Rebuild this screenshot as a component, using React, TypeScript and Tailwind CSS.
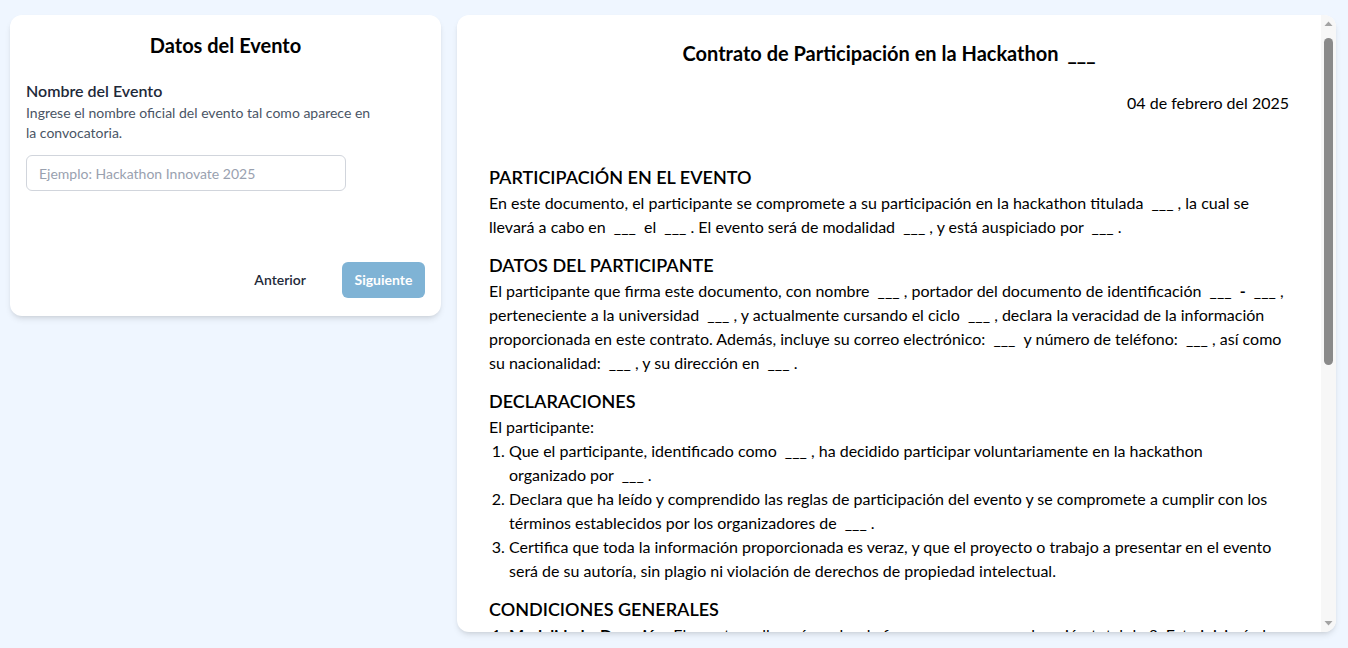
import React from 'react';

const Blank = () => <span className="ml-1">___</span>;

const EventForm = () => {
  return (
    <div className="w-[431px] shrink-0 self-start rounded-xl bg-white px-4 pt-4 pb-[18px] shadow-md">
      <h2 className="text-center text-xl font-bold text-black">Datos del Evento</h2>
      <div className="mt-5">
        <label className="block font-semibold text-gray-800">Nombre del Evento</label>
        <p className="max-w-[350px] text-sm text-gray-600">
          Ingrese el nombre oficial del evento tal como aparece en la convocatoria.
        </p>
        <input
          type="text"
          placeholder="Ejemplo: Hackathon Innovate 2025"
          className="mt-3 h-9 w-80 rounded-md border border-gray-300 px-3 text-sm text-gray-800 placeholder:text-gray-400"
        />
      </div>
      <div className="mt-[71px] flex items-center justify-end gap-5">
        <button className="px-4 text-sm font-semibold text-gray-800">Anterior</button>
        <button className="h-9 w-[83px] rounded-md bg-[#7fb3d5] text-sm font-bold text-white">Siguiente</button>
      </div>
    </div>
  );
};

// the browser hides its own scrollbar in the capture, so draw the classic one
const FakeScrollbar = () => (
  <div className="flex w-[15px] shrink-0 flex-col items-center bg-[#f7f7f7]">
    <svg width="15" height="17" viewBox="0 0 15 17">
      <path d="M3.5 11 L7.5 6.5 L11.5 11 Z" fill="#a3a3a3" />
    </svg>
    <div className="mt-1.5 h-[327px] w-[9px] rounded-full bg-[#8a8a8a]" />
    <div className="flex-1" />
    <svg width="15" height="17" viewBox="0 0 15 17">
      <path d="M3.5 6 L7.5 10.5 L11.5 6 Z" fill="#a3a3a3" />
    </svg>
  </div>
);

const ContractPreview = () => {
  return (
    <div className="flex h-[617px] flex-1 overflow-hidden rounded-xl bg-white shadow-md">
      <div className="flex-1 overflow-hidden px-8 pt-6 text-base leading-6 text-black">
        <h1 className="text-center text-xl font-bold leading-7">
          Contrato de Participación en la Hackathon <Blank />
        </h1>
        <p className="mt-6 text-right">04 de febrero del 2025</p>

        <section className="mt-12">
          <h3 className="text-lg font-semibold leading-7">PARTICIPACIÓN EN EL EVENTO</h3>
          <p>
            En este documento, el participante se compromete a su participación en la hackathon titulada <Blank /> , la cual se llevará a cabo en <Blank />  <span className="ml-1">el</span> <Blank /> . El evento será de modalidad <Blank /> , y está auspiciado por <Blank /> .
          </p>
        </section>

        <section className="mt-3">
          <h3 className="text-lg font-semibold leading-7">DATOS DEL PARTICIPANTE</h3>
          <p>
            El participante que firma este documento, con nombre <Blank /> , portador del documento de identificación <Blank /> <b className="ml-1">-</b> <Blank /> , perteneciente a la universidad <Blank /> , y actualmente cursando el ciclo <Blank /> , declara la veracidad de la información proporcionada en este contrato. Además, incluye su correo electrónico: <Blank /> <span className="ml-1">y</span> número de teléfono: <Blank /> , así como su nacionalidad: <Blank /> , y su dirección en <Blank /> .
          </p>
        </section>

        <section className="mt-3">
          <h3 className="text-lg font-semibold leading-7">DECLARACIONES</h3>
          <p>El participante:</p>
          <ol className="ml-5 list-decimal">
            <li>
              Que el participante, identificado como <Blank /> , ha decidido participar voluntariamente en la hackathon
              <br />
              organizado por <Blank /> .
            </li>
            <li>Declara que ha leído y comprendido las reglas de participación del evento y se compromete a cumplir con los términos establecidos por los organizadores de <Blank /> .</li>
            <li>Certifica que toda la información proporcionada es veraz, y que el proyecto o trabajo a presentar en el evento será de su autoría, sin plagio ni violación de derechos de propiedad intelectual.</li>
          </ol>
        </section>

        <section className="mt-3">
          <h3 className="text-lg font-semibold leading-7">CONDICIONES GENERALES</h3>
          <ol className="ml-5 list-decimal">
            <li><b>Modalidad y Duración:</b> El evento se llevará a cabo de forma <Blank /> , con una duración total de 8. Este iniciará el <Blank /> y finalizará el <Blank /> .</li>
            <li><b>Requisitos de Participación:</b> El participante deberá cumplir con todos los requisitos establecidos en las bases del evento.</li>
          </ol>
        </section>
      </div>
      <FakeScrollbar />
    </div>
  );
};

export default function App() {
  return (
    <div className="flex min-h-screen gap-4 bg-blue-50 pt-[15px] pr-3 pl-2.5 font-['Lato',sans-serif]">
      <EventForm />
      <ContractPreview />
    </div>
  );
}
